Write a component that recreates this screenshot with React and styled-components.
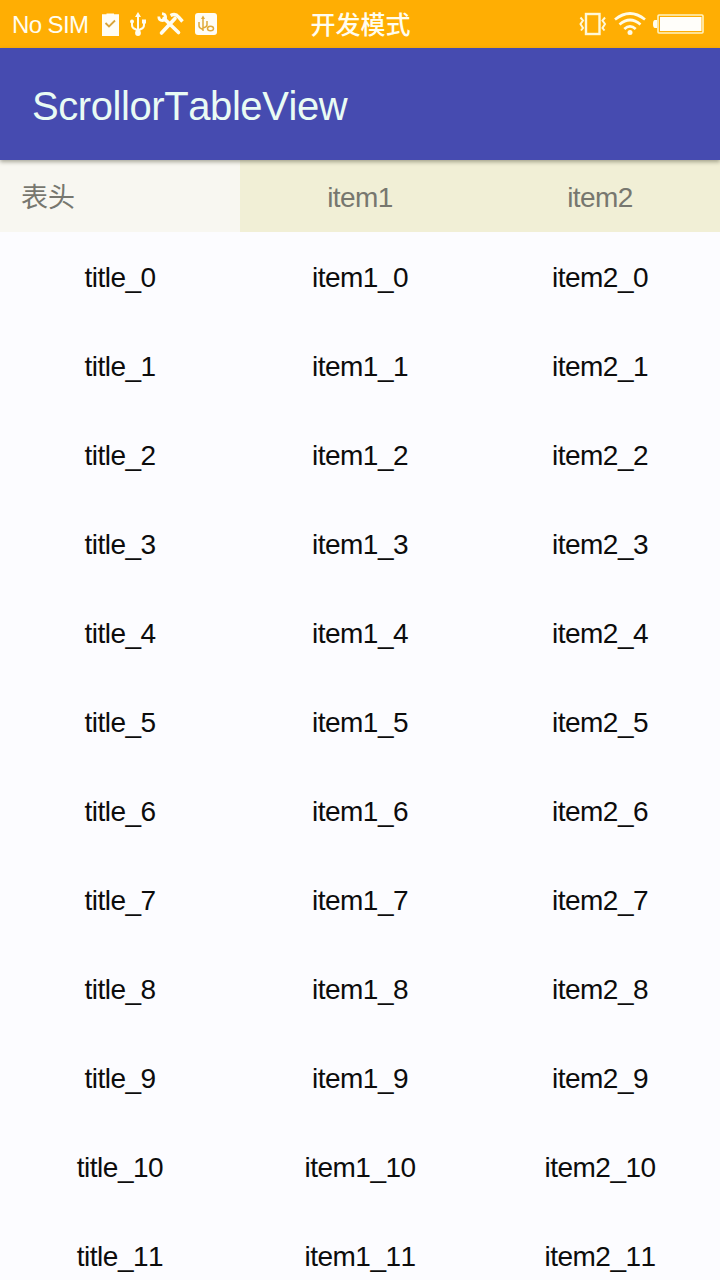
import React from "react";
import styled, { createGlobalStyle } from "styled-components";

const Global = createGlobalStyle`
  * { box-sizing: border-box; }
  body { margin: 0; background: #fcfcff; overflow: hidden; }
`;

const Screen = styled.div`
  width: 720px;
  height: 1280px;
  overflow: hidden;
  display: flex;
  flex-direction: column;
  background: #fcfcff;
  font-family: "Liberation Sans", "Noto Sans CJK SC", sans-serif;
  font-kerning: none;
`;

const StatusBar = styled.header`
  flex: none;
  height: 48px;
  padding: 0 15px 0 12px;
  display: grid;
  grid-template-columns: 1fr auto 1fr;
  grid-template-rows: 48px;
  align-items: center;
  background: #ffae03;
  color: #fffdf0;
`;

const StatusGroup = styled.div`
  display: flex;
  align-items: center;
  justify-content: ${(p) => (p.$end ? "flex-end" : "flex-start")};
  gap: ${(p) => p.$gap}px;
`;

const Carrier = styled.span`
  font-size: 24px;
  line-height: 46px;
  padding-top: 2px;
  letter-spacing: -0.6px;
  white-space: nowrap;
  margin-right: 3px;
`;

const Mode = styled.span`
  font-family: "Noto Sans CJK SC", sans-serif;
  font-size: 25px;
  font-weight: 500;
  line-height: 46px;
  padding-bottom: 2px;
  margin-left: 4px;
`;

const Icon = styled.svg`
  display: block;
  flex: none;
`;

const AppBar = styled.div`
  flex: none;
  height: 112px;
  padding: 5px 32px 0;
  display: flex;
  align-items: center;
  background: #464bb0;
  box-shadow: 0 2px 4px rgba(70, 70, 50, 0.45);
  z-index: 1;
`;

const Title = styled.h1`
  margin: 0;
  font-size: 40px;
  font-weight: 400;
  letter-spacing: -0.42px;
  color: #e9fbf4;
`;

const Row = styled.div`
  flex: none;
  height: 89px;
  padding-top: 2px;
  display: grid;
  grid-template-columns: repeat(3, 240px);
  align-items: center;
  color: #0c0c0c;
`;

const HeaderRow = styled(Row)`
  height: 72px;
  padding-top: 0;
  align-items: stretch;
  color: #77776f;
`;

const Cell = styled.div`
  font-size: 28px;
  line-height: 40px;
  letter-spacing: -0.5px;
  text-align: center;
`;

const HeaderCell = styled(Cell)`
  padding: ${(p) => (p.$lead ? "3px 21px 0" : "3px 0 0")};
  font-size: ${(p) => (p.$lead ? 27 : 28)}px;
  line-height: 70px;
  height: 72px;
  overflow: hidden;
  letter-spacing: ${(p) => (p.$lead ? 0 : -0.6)}px;
  text-align: ${(p) => (p.$lead ? "left" : "center")};
  background: ${(p) => (p.$lead ? "#f8f7f1" : "#f1efd6")};
`;

const Clipboard = () => (
  <Icon width="17" height="23" viewBox="0 0 17 23">
    <path d="M0 1.200h4.500V0.500h7.500v0.700H17V23H0z" fill="#fffdf5" />
    <path d="M3.500 10l3.500 3.500 6-6" fill="none" stroke="#d9a53a" strokeWidth="1.8" />
  </Icon>
);

const Usb = () => (
  <Icon width="16" height="24" viewBox="0 0 16 24">
    <g fill="none" stroke="#fffdf0" strokeWidth="2">
      <path d="M8 3v18M2 9v4q0 3 3 4l3 1.500M14 9v4q0 3-3 4l-3 1.500" />
    </g>
    <path d="M8 0l3 5H5z" fill="#fffdf0" />
    <circle cx="2" cy="9.500" r="2" fill="#fffdf0" />
    <path d="M12 7.500h4v4h-4z" fill="#fffdf0" />
    <circle cx="8" cy="21" r="2.9" fill="#fffdf0" />
  </Icon>
);

const Tools = () => (
  <Icon width="27" height="24" viewBox="0 0 27 24">
    <g fill="none" stroke="#fffdf0">
      <path d="M7 6.500L21.500 20.500" strokeWidth="3.6" strokeLinecap="round" />
      <path d="M4.500 21L18 6.500" strokeWidth="3.6" strokeLinecap="round" />
      <path d="M1.800 4.500q0 4 3.600 4t3.200-3.600Q8.300 2 5 1.700" strokeWidth="2.8" />
      <path d="M13.500 3.500q5-2.500 8 1.500l4 4.500" strokeWidth="3.4" />
    </g>
  </Icon>
);

const UsbDebug = () => (
  <Icon width="22" height="22" viewBox="0 0 22 22">
    <rect width="22" height="22" rx="3" fill="#fffdf5" />
    <g fill="none" stroke="#e0a93a" strokeWidth="1.5">
      <path d="M8 4v14M4 9v4q0 2 4 3.500M12 8v4q0 2-4 3" />
      <ellipse cx="15.500" cy="15.500" rx="3" ry="2.300" />
    </g>
    <path d="M8 2.500l2 3.500H6z" fill="#e0a93a" />
  </Icon>
);

const Vibrate = () => (
  <Icon width="28" height="24" viewBox="0 0 28 24">
    <g fill="none" stroke="#fff8d8">
      <rect x="7" y="2" width="13.500" height="20" strokeWidth="2.4" />
      <path d="M1.500 5.500l2.500 3-2.500 3.500 2.500 4-2 2.500M26 5.500L23.500 8.500l2.500 3.500-2.500 4 2 2.500" strokeWidth="2" />
    </g>
  </Icon>
);

const Wifi = () => (
  <Icon width="32" height="24" viewBox="0 0 32 24">
    <g fill="none" stroke="#fffbe6" strokeWidth="2.7">
      <path d="M1 7.500Q16-4.500 31 7.500" />
      <path d="M5.500 12.500Q16 3.500 26.500 12.500" />
      <path d="M10.300 17Q16 11.800 21.700 17" />
    </g>
    <circle cx="16" cy="20.500" r="2.5" fill="#fffbe6" />
  </Icon>
);

const Battery = () => (
  <Icon width="52" height="20" viewBox="0 0 52 20">
    <path d="M4 6H2Q0 6 0 10t2 4h2z" fill="#fffdf0" />
    <rect x="5" y="1" width="45" height="18" rx="1" fill="none" stroke="#fff3c4" strokeWidth="1.6" />
    <rect x="7" y="3" width="41.500" height="14" fill="#fffefa" />
  </Icon>
);

const rows = Array.from({ length: 12 }, (_, i) => i);

export default function App() {
  return (
    <Screen>
      <Global />
      <StatusBar>
        <StatusGroup $gap={11}>
          <Carrier>No SIM</Carrier>
          <Clipboard />
          <Usb />
          <Tools />
          <UsbDebug />
        </StatusGroup>
        <Mode>开发模式</Mode>
        <StatusGroup $end $gap={7}>
          <Vibrate />
          <Wifi />
          <Battery />
        </StatusGroup>
      </StatusBar>
      <AppBar>
        <Title>ScrollorTableView</Title>
      </AppBar>
      <HeaderRow>
        <HeaderCell $lead>表头</HeaderCell>
        <HeaderCell>item1</HeaderCell>
        <HeaderCell>item2</HeaderCell>
      </HeaderRow>
      {rows.map((i) => (
        <Row key={i}>
          <Cell>{`title_${i}`}</Cell>
          <Cell>{`item1_${i}`}</Cell>
          <Cell>{`item2_${i}`}</Cell>
        </Row>
      ))}
    </Screen>
  );
}
